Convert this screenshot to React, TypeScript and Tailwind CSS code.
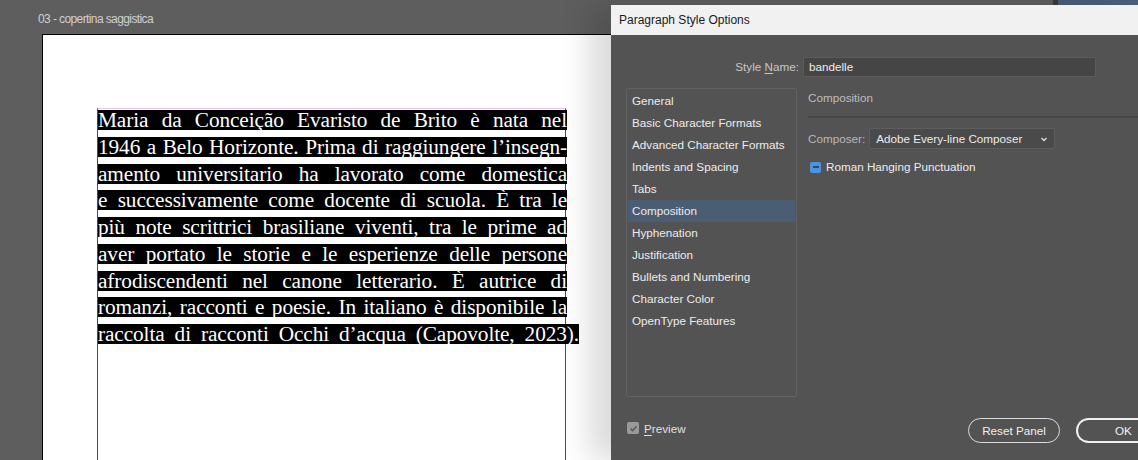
import React from "react";

const lines = [
  "Maria da Conceição Evaristo de Brito è nata nel",
  "1946 a Belo Horizonte. Prima di raggiungere l’insegn-",
  "amento universitario ha lavorato come domestica",
  "e successivamente come docente di scuola. È tra le",
  "più note scrittrici brasiliane viventi, tra le prime ad",
  "aver portato le storie e le esperienze delle persone",
  "afrodiscendenti nel canone letterario. È autrice di",
  "romanzi, racconti e poesie. In italiano è disponibile la",
  "raccolta di racconti Occhi d’acqua (Capovolte, 2023).",
];

const sections = [
  "General",
  "Basic Character Formats",
  "Advanced Character Formats",
  "Indents and Spacing",
  "Tabs",
  "Composition",
  "Hyphenation",
  "Justification",
  "Bullets and Numbering",
  "Character Color",
  "OpenType Features",
];

const ui = "font-['Liberation_Sans',Arial,sans-serif]";

const Document = () => (
  <div className="flex flex-col h-full">
    <div className="flex h-[34px]">
      <div
        className={`pl-[38px] pt-[10px] text-[12px] text-[#d0d0d0] tracking-[-0.6px] ${ui}`}
      >
        03 - copertina saggistica
      </div>
      <div className="ml-auto flex items-start">
        <div className="w-[5px] h-[5px] bg-[#3b3b3b]" />
        <div className="w-[80px] h-[5px] bg-[#4a5e78]" />
      </div>
    </div>
    <div className="ml-[42px] flex-1 bg-white border-l border-t border-black pl-[54px] pt-[73px]">
      <div className="w-[469px] h-full border-t border-[#e4c6ec] border-l border-r border-l-[#1f6b1f] border-r-[#1f6b1f] pt-[1px]">
        {lines.map((line, i) => (
          <div
            key={i}
            className={`h-[20px] mb-[6.75px] bg-black text-white leading-[20px] text-[21.3px] tracking-[-0.1px] whitespace-nowrap text-justify [text-align-last:justify] font-['Liberation_Serif','Times_New_Roman',serif] ${
              i === lines.length - 1 ? "w-[481px]" : "w-[469px]"
            }`}
          >
            {line}
          </div>
        ))}
      </div>
    </div>
  </div>
);

const Dialog = () => (
  <div
    className={`absolute left-[611px] top-[5px] right-0 bottom-0 flex flex-col shadow-[-22px_0_28px_rgba(0,0,0,0.14)] ${ui}`}
  >
    <div className="h-[30px] bg-[#f1f1f1] pl-[8px] flex items-center text-[12px] text-[#1a1a1a]">
      Paragraph Style Options
    </div>
    <div className="flex-1 bg-[#535353] flex flex-col text-[11.7px]">
      <div className="flex items-center mt-[22px] h-[20px]">
        <div className="w-[188px] text-right text-[#c6c6c6]">
          Style <span className="underline underline-offset-2">N</span>ame:
        </div>
        <div className="ml-[4px] w-[293px] h-[20px] bg-[#454545] border border-[#5c5c5c] rounded-[2px] flex items-center pl-[5px] text-[#ececec]">
          bandelle
        </div>
      </div>
      <div className="flex mt-[11px] pl-[15px]">
        <div className="w-[171px] h-[309px] border border-[#626262] rounded-[2px] pt-[1px] px-[1px]">
          {sections.map((s) => (
            <div
              key={s}
              className={`h-[22px] leading-[22px] pl-[4px] text-[#ececec] ${
                s === "Composition" ? "bg-[#4b5d73]" : ""
              }`}
            >
              {s}
            </div>
          ))}
        </div>
        <div className="flex-1 ml-[11px] flex flex-col">
          <div className="h-[20px] leading-[20px] text-[#bdbdbd]">
            Composition
          </div>
          <div className="mt-[8px] h-[2px] bg-[#474747]" />
          <div className="mt-[10px] flex items-center h-[21px]">
            <span className="text-[#b8b8b8]">Composer:</span>
            <div className="ml-[4px] w-[186px] h-[21px] bg-[#4a4a4a] border border-[#5e5e5e] rounded-[2px] flex items-center pl-[6px] pr-[5px] text-[#ececec]">
              <span>Adobe Every-line Composer</span>
              <svg
                className="ml-auto"
                width="10"
                height="10"
                viewBox="0 0 10 10"
                fill="none"
              >
                <path
                  d="M2.5 4 L5 6.5 L7.5 4"
                  stroke="#e0e0e0"
                  strokeWidth="1.3"
                />
              </svg>
            </div>
          </div>
          <div className="mt-[11px] flex items-center h-[14px] pl-[2px]">
            <div className="w-[11px] h-[11px] rounded-[2px] bg-[#4b95e0] flex items-center justify-center">
              <div className="w-[6px] h-[2px] bg-[#2a4a70]" />
            </div>
            <span className="ml-[5px] text-[#ececec]">
              Roman Hanging Punctuation
            </span>
          </div>
        </div>
      </div>
      <div className="mt-auto mb-[17px] flex items-center pl-[16px]">
        <div className="flex items-center -mt-[4px]">
          <div className="w-[12px] h-[12px] rounded-[2px] bg-[#9a9a9a] flex items-center justify-center">
            <svg width="9" height="9" viewBox="0 0 9 9" fill="none">
              <path
                d="M1.5 4.6 L3.6 6.6 L7.6 2.2"
                stroke="#5a5a5a"
                strokeWidth="1.5"
              />
            </svg>
          </div>
          <span className="ml-[5px] text-[#e0e0e0]">
            <span className="underline underline-offset-2">P</span>review
          </span>
        </div>
        <button className="ml-auto w-[92px] h-[25px] rounded-full border-[1.5px] border-[#dcdcdc] text-[#f0f0f0]">
          Reset Panel
        </button>
        <button className="ml-[16px] w-[62px] h-[25px] rounded-l-full border-[2px] border-r-0 border-[#f0f0f0] text-[#f4f4f4] pl-[37px] text-left">
          OK
        </button>
      </div>
    </div>
  </div>
);

export default function App() {
  return (
    <div className="relative w-[1138px] h-[460px] overflow-hidden bg-[#5e5e5e]">
      <Document />
      <Dialog />
    </div>
  );
}
